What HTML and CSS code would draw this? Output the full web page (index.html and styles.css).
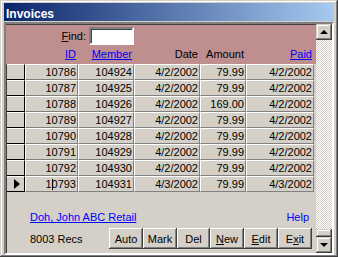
FILE: index.html
```html
<!DOCTYPE html>
<html lang="en">
  <head>
    <meta charset="UTF-8" />
    <meta name="viewport" content="width=device-width, initial-scale=1.0" />
    <title>Invoices</title>
    <link rel="stylesheet" href="styles.css">
  </head>

  <body>
    <div class="window">
      <div class="title">Invoices</div>

      <div class="client">
        <div class="content">
          <!-- pink header band -->
          <div class="head">
            <div class="find">
              <label for="find"><u>F</u>ind:</label>
              <input id="find" class="find-box" type="text" />
            </div>
            <div class="label"></div>
            <div class="label"><a href="#">ID</a></div>
            <div class="label"><a href="#">Member</a></div>
            <div class="label">Date</div>
            <div class="label">Amount</div>
            <div class="label"><a href="#">Paid</a></div>
          </div>

          <div class="rows">
            <div class="row">
              <div class="sel"></div>
              <div class="cell">10786</div>
              <div class="cell">104924</div>
              <div class="cell">4/2/2002</div>
              <div class="cell">79.99</div>
              <div class="cell">4/2/2002</div>
            </div>
            <div class="row">
              <div class="sel"></div>
              <div class="cell">10787</div>
              <div class="cell">104925</div>
              <div class="cell">4/2/2002</div>
              <div class="cell">79.99</div>
              <div class="cell">4/2/2002</div>
            </div>
            <div class="row">
              <div class="sel"></div>
              <div class="cell">10788</div>
              <div class="cell">104926</div>
              <div class="cell">4/2/2002</div>
              <div class="cell">169.00</div>
              <div class="cell">4/2/2002</div>
            </div>
            <div class="row">
              <div class="sel"></div>
              <div class="cell">10789</div>
              <div class="cell">104927</div>
              <div class="cell">4/2/2002</div>
              <div class="cell">79.99</div>
              <div class="cell">4/2/2002</div>
            </div>
            <div class="row">
              <div class="sel"></div>
              <div class="cell">10790</div>
              <div class="cell">104928</div>
              <div class="cell">4/2/2002</div>
              <div class="cell">79.99</div>
              <div class="cell">4/2/2002</div>
            </div>
            <div class="row">
              <div class="sel"></div>
              <div class="cell">10791</div>
              <div class="cell">104929</div>
              <div class="cell">4/2/2002</div>
              <div class="cell">79.99</div>
              <div class="cell">4/2/2002</div>
            </div>
            <div class="row">
              <div class="sel"></div>
              <div class="cell">10792</div>
              <div class="cell">104930</div>
              <div class="cell">4/2/2002</div>
              <div class="cell">79.99</div>
              <div class="cell">4/2/2002</div>
            </div>
            <div class="row">
              <div class="sel current"><span class="pointer"></span></div>
              <div class="cell">1<i class="caret"></i>0793</div>
              <div class="cell">104931</div>
              <div class="cell">4/3/2002</div>
              <div class="cell">79.99</div>
              <div class="cell">4/3/2002</div>
            </div>
          </div>

          <div class="foot">
            <div class="links">
              <a href="#">Doh, John ABC Retail</a>
              <span class="help">Help</span>
            </div>
            <div class="bar">
              <span class="count">8003 Recs</span>
              <div class="buttons">
                <button class="btn">Auto</button>
                <button class="btn">Mark</button>
                <button class="btn">Del</button>
                <button class="btn"><u>N</u>ew</button>
                <button class="btn"><u>E</u>dit</button>
                <button class="btn">E<u>x</u>it</button>
              </div>
            </div>
          </div>
        </div>

        <div class="scroll">
          <div class="arrow"><span class="up"></span></div>
          <div class="track"></div>
          <div class="thumb"></div>
          <div class="arrow"><span class="down"></span></div>
        </div>
      </div>
    </div>
  </body>
</html>
```

FILE: styles.css
```css
* {
  box-sizing: border-box;
  font-family: "Liberation Sans", Arial, sans-serif;
}

body {
  margin: 0;
  background-color: #d4d0c8;
}

a {
  color: #0000ff;
}

.window {
  width: 338px;
  height: 257px;
  padding: 3px 4px 2px 4px;
  background-color: #d4d0c8;
  box-shadow: inset -1px -1px #404040, inset 1px 1px #d4d0c8,
    inset -2px -2px #808080, inset 2px 2px #ffffff;
}

.title {
  height: 18px;
  padding: 4px 0 0 2px;
  line-height: 14px;
  font-size: 12px;
  font-weight: bold;
  color: white;
  background: linear-gradient(to right, #0a246a, #a6caf0);
}

.client {
  display: flex;
  margin-top: 1px;
  height: 233px;
  border: 2px solid;
  border-color: #808080 #ffffff #ffffff #808080;
  box-shadow: inset 1px 1px #404040;
}

.content {
  width: 310px;
  display: flex;
  flex-direction: column;
  font-size: 11px;
  padding: 1px 0 0 1px;
}

/* header band */
.head {
  display: grid;
  grid-template-columns: 18px 53px 56px 66px 46px 68px;
  grid-template-rows: 21px 18px;
  background-color: #bf8e8e;
  margin-left: -1px;
  padding-left: 1px;
}

.find {
  grid-row: 1;
  grid-column: 1 / 4;
  display: flex;
  justify-content: flex-end;
  align-items: center;
  gap: 3px;
}

.find-box {
  width: 45px;
  height: 18px;
  margin: 1px 0 0 0;
  padding: 0;
  background: white;
  border: 2px solid;
  border-color: #808080 #ffffff #ffffff #808080;
  box-shadow: inset 1px 1px #404040;
}

.label {
  grid-row: 2;
  text-align: right;
  padding-right: 2px;
  line-height: 16px;
}

.rows {
  display: flex;
  flex-direction: column;
}

.row {
  display: grid;
  grid-template-columns: 18px 53px 56px 66px 46px 68px;
  height: 16px;
}

.sel {
  border-right: 1px solid #000;
  border-bottom: 1px solid #000;
  border-top: 1px solid #fff;
  display: flex;
  align-items: center;
  padding-left: 7px;
}

.pointer {
  width: 0;
  height: 0;
  border-left: 6px solid #000;
  border-top: 5px solid transparent;
  border-bottom: 5px solid transparent;
}

.cell {
  text-align: right;
  padding-right: 1px;
  line-height: 14px;
  border: 1px solid;
  border-color: #ffffff #808080 #808080 #ffffff;
}

.caret {
  display: inline-block;
  width: 1px;
  height: 11px;
  margin-right: -1px;
  background: #000;
  vertical-align: -2px;
}

/* bottom part */
.foot {
  flex: 1;
  display: flex;
  flex-direction: column;
  padding: 19px 0 0 23px;
}

.links {
  display: flex;
  justify-content: space-between;
  padding-right: 7px;
  line-height: 13px;
}

.help {
  color: #0000ff;
}

.bar {
  display: flex;
  align-items: center;
  margin-top: 4px;
  padding-right: 4px;
}

.buttons {
  display: flex;
  margin-left: auto;
}

.btn {
  width: 34px;
  height: 21px;
  padding: 0;
  font-size: 11px;
  color: black;
  background-color: #d4d0c8;
  border: none;
  box-shadow: inset -1px -1px #404040, inset 1px 1px #ffffff,
    inset -2px -2px #808080, inset 2px 2px #d4d0c8;
}

.btn:nth-child(3) {
  width: 33px;
}

/* scrollbar */
.scroll {
  width: 16px;
  display: flex;
  flex-direction: column;
}

.arrow,
.thumb {
  height: 16px;
  display: flex;
  align-items: center;
  justify-content: center;
  background-color: #d4d0c8;
  box-shadow: inset -1px -1px #404040, inset 1px 1px #d4d0c8,
    inset -2px -2px #808080, inset 2px 2px #ffffff;
}

.thumb {
  height: 8px;
}

.track {
  flex: 1;
  background: repeating-conic-gradient(#ffffff 0 25%, #d4d0c8 0 50%);
  background-size: 2px 2px;
}

.up,
.down {
  width: 0;
  height: 0;
  border-left: 4px solid transparent;
  border-right: 4px solid transparent;
}

.up {
  border-bottom: 4px solid #000;
}

.down {
  border-top: 4px solid #000;
}
```
